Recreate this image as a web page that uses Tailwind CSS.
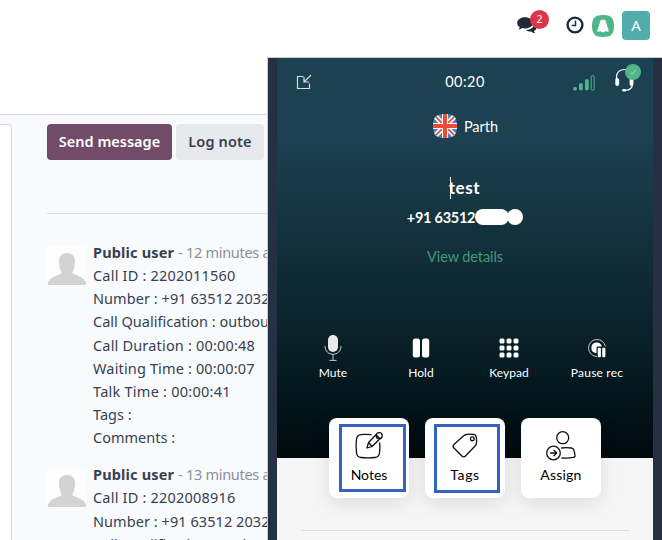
<!DOCTYPE html>
<html lang="en">
<head>
<meta charset="utf-8">
<title>Call log</title>
<script src="https://cdn.jsdelivr.net/npm/@tailwindcss/browser@4"></script>
</head>
<body class="bg-white">
<div class="relative flex h-[540px] w-[662px] flex-col overflow-hidden font-['Noto_Sans',sans-serif] text-[#374151]">

  <header class="flex h-[115px] shrink-0 items-start justify-end border-b border-[#d8dadd] bg-white pt-[11px] pr-3">
    <div class="relative mt-[6px] mr-[29px] h-[18px] w-5">
      <svg class="h-[18px] w-5" viewBox="0 0 20 18" fill="#1f2937">
        <path d="M8 0.3C3.6 0.3 0.2 2.8 0.2 6c0 1.8 1 3.3 2.6 4.3-.3.9-.9 1.600-1.500 2.100 1.600 0 3-.6 4-1.300.9.200 1.800.300 2.700.300 4.400 0 7.900-2.400 7.900-5.500S12.400.3 8 .3z"/>
        <path d="M17.200 7c.2 3.200-3.300 5.800-8.200 5.900 1.200 1.100 3.100 1.700 5.200 1.700 1 1 2.500 1.600 4.200 1.600-.7-.6-1.200-1.300-1.400-2.100 1.600-.9 2.600-2 2.600-3.500 0-1.500-.9-2.800-2.400-3.600z"/>
      </svg>
      <span class="absolute -top-[7px] left-[13px] flex h-[19px] w-[19px] items-center justify-center rounded-full bg-[#dc3545] pb-px text-[10.500px] leading-none text-white">2</span>
    </div>
    <svg class="mt-[5px] mr-2 h-[18px] w-[18px]" viewBox="0 0 18 18" fill="none" stroke="#1f2937">
      <circle cx="9" cy="9" r="7.400" stroke-width="2.400"/><path d="M9.500 4.500v5H5.800" stroke-width="1.500"/>
    </svg>
    <svg class="mt-[4px] mr-2 h-[22px] w-[22px]" viewBox="0 0 22 22">
      <path d="M11 0C19 0 22 3 22 11s-3 11-11 11S0 19 0 11 3 0 11 0z" fill="#50b588"/>
      <path d="M9.600 4.800h2.800q.8 0 1.100.9l3.200 9.800q.3 1.500-.9 1.200c-1.300-.4-1.700-.8-2.300-.4q-1.200 1-2.500 1t-2.500-1c-.6-.4-1 0-2.300.4q-1.200.3-.9-1.200l3.200-9.800q.3-.9 1.100-.9z" fill="#fff"/>
    </svg>
    <div class="flex h-[29px] w-7 items-center justify-center rounded bg-[#51acac] text-[15px] text-white">A</div>
  </header>

  <main class="flex min-h-0 flex-1 bg-[#f9fafb]">
    <div class="mt-[9px] w-3 shrink-0 rounded-tr border-t border-r border-[#d8dadd] bg-white"></div>
    <section class="ml-[35px] flex w-[221px] shrink-0 flex-col pt-[9px]">
      <div class="flex h-9 shrink-0 gap-1 text-[14.500px] font-semibold">
        <button class="w-[125px] shrink-0 rounded-[4px] bg-[#714b67] text-white">Send message</button>
        <button class="w-[88px] shrink-0 rounded-[4px] bg-[#e7e9ed]"><span class="tracking-[0.150px]">Log note</span></button>
      </div>
      <div class="mt-[53px] border-t border-[#d8dadd]"></div>

      <div class="mt-[27px] flex h-[222px] shrink-0 gap-[6px]">
        <svg class="mt-[5px] h-10 w-10 shrink-0" viewBox="0 0 40 40"><rect width="40" height="40" fill="#fdfdfd"/><path d="M20 7c5 0 8.200 3 8 8.500-.2 4.500-1 8.300-2.800 11 .3 1 1.300 1.500 2.800 2 5.500 2 10 4.700 11 8 .6 1.800-.3 2.500-1.800 2.500H3c-1.500 0-2.600-.7-2-2.500 1-3.300 5.500-6 11-8 1.500-.5 2.500-1 2.800-2-1.800-2.700-2.600-6.500-2.800-11C11.800 10 15 7 20 7z" fill="#d3d3d3"/></svg>
        <div class="text-[14.500px] leading-[23.150px] whitespace-nowrap">
          <p><b class="font-bold tracking-[0.170px]">Public user</b> <span class="tracking-[-0.280px] text-[#8b919b]">- 12 minutes ago</span></p>
          <p class="tracking-[0.200px]">Call ID : 2202011560</p><p class="tracking-[0.060px]">Number : +91 63512 20321</p><p>Call Qualification : outbound</p><p class="tracking-[0.180px]">Call Duration : 00:00:48</p><p class="tracking-[0.150px]">Waiting Time : 00:00:07</p><p class="tracking-[0.250px]">Talk Time : 00:00:41</p><p>Tags :</p><p>Comments :</p>
        </div>
      </div>
      <div class="flex shrink-0 gap-[6px]">
        <svg class="mt-[5px] h-10 w-10 shrink-0" viewBox="0 0 40 40"><rect width="40" height="40" fill="#fdfdfd"/><path d="M20 7c5 0 8.200 3 8 8.500-.2 4.500-1 8.300-2.800 11 .3 1 1.300 1.500 2.800 2 5.500 2 10 4.700 11 8 .6 1.800-.3 2.500-1.800 2.500H3c-1.500 0-2.600-.7-2-2.500 1-3.300 5.500-6 11-8 1.500-.5 2.500-1 2.800-2-1.800-2.700-2.600-6.500-2.800-11C11.800 10 15 7 20 7z" fill="#d3d3d3"/></svg>
        <div class="text-[14.500px] leading-[23.400px] whitespace-nowrap">
          <p><b class="font-bold tracking-[0.170px]">Public user</b> <span class="tracking-[-0.280px] text-[#8b919b]">- 13 minutes ago</span></p>
          <p class="tracking-[0.200px]">Call ID : 2202008916</p><p class="tracking-[0.060px]">Number : +91 63512 20321</p><p>Call Qualification : outbound</p>
        </div>
      </div>
    </section>
  </main>

  <aside class="absolute top-[57px] left-[267px] h-[483px] w-[395px] overflow-hidden border-t border-l border-[#c9cdd2] bg-[#253142] px-[9px] font-['Lato',sans-serif] text-white">
    <div class="flex h-full flex-col bg-[#f6f6f6]">
      <div class="flex h-[400px] shrink-0 flex-col bg-linear-to-b from-[#1c4150] from-20% via-[#0b222b] via-68% to-[#000a0e]">
        <div class="grid h-[46px] grid-cols-3 items-center px-[19px]">
          <svg class="mt-px h-4 w-4" viewBox="0 0 16 16" fill="none" stroke="#d7dfe2" stroke-width="1.200"><path d="M7.500 2.500h-6v12h12v-5M15 1 8 8M8 3v5h5"/></svg>
          <span class="pt-px text-center text-[14.500px] tracking-[0.450px]">00:20</span>
          <div class="flex h-7 items-end justify-end">
            <svg class="mr-5 mb-1 h-4 w-[22px]" viewBox="0 0 22 16" fill="#50b588"><circle cx="2" cy="13.700" r="1.900"/><rect x="6" y="8" width="3.800" height="7.500" rx="1.900"/><rect x="12" y="4" width="3.800" height="11.500" rx="1.900"/><rect x="18.200" y=".6" width="3" height="14.600" rx="1.500" fill="none" stroke="#50b588"/></svg>
            <div class="relative mb-[3px] h-6 w-[19px]">
              <svg class="h-6 w-[19px]" viewBox="0 0 19 24" fill="none" stroke="#fff"><path d="M1.500 12V9C1.500 4 5 1.500 9.500 1.500S17.500 4 17.500 9v7c0 4-2 6-7.500 6.500" stroke-width="1.200"/><path d="M2.200 12v4M16.500 12v4" stroke-width="3.800" stroke-linecap="round"/><rect x="7.200" y="21" width="4" height="2.600" rx="1.300" fill="#fff" stroke="none"/></svg>
              <span class="absolute top-[-4px] left-[10px] flex h-4 w-4 items-center justify-center rounded-full bg-[#50b588]"><svg class="h-2 w-2" viewBox="0 0 8 8" fill="none" stroke="#c5e8d8" stroke-width=".7"><path d="m1.500 4.500 1.700 1.700L6.800 2"/></svg></span>
            </div>
          </div>
        </div>
        <div class="mt-[10px] flex h-6 items-center justify-center gap-[7px] pl-px">
          <svg class="h-6 w-6" viewBox="0 0 24 24"><defs><clipPath id="flag"><path d="M12 0C21 0 24 3 24 12s-3 12-12 12S0 21 0 12 3 0 12 0z"/></clipPath></defs><g clip-path="url(#flag)"><path d="M0 0h24v24H0z" fill="#4a83be"/><path d="M0 0 24 24M24 0 0 24" stroke="#fff" stroke-width="5"/><path d="M0 0 24 24M24 0 0 24" stroke="#ee4b36" stroke-width="1.800"/><path d="M12 0v24M0 12h24" stroke="#fff" stroke-width="6"/><path d="M12 0v24M0 12h24" stroke="#ee4b36" stroke-width="4"/></g></svg>
          <span class="pt-[2px] text-[14.500px]">Parth</span>
        </div>
        <div class="mt-[39px] flex h-[22px] items-center justify-center"><span class="h-[22px] w-px bg-white"></span><span class="-ml-[2px] text-[17px] font-bold tracking-[0.600px]">test</span></div>
        <div class="mt-[9px] flex h-[18px] items-center justify-center"><span class="pt-px text-[14.500px] font-bold tracking-[-0.250px]">+91 63512</span><span class="flex h-4 w-[34px] rounded-full bg-white"></span><span class="-ml-[2px] h-4 w-4 rounded-full bg-white"></span></div>
        <p class="mt-[21px] text-center text-[14.500px] leading-5 tracking-[-0.100px] text-[#3f9b77]">View details</p>
        <div class="mt-[68px] grid grid-cols-4 px-3 text-center text-[12px] leading-4">
          <div class="flex flex-col items-center gap-[4px]"><svg class="h-[26px] w-[18px]" viewBox="0 0 18 26" fill="none" stroke="#c2cace"><rect x="4" y="0" width="10" height="17" rx="5" fill="#e6e8ea" stroke="none"/><path d="M1 11c0 11 16 11 16 0M9 19v6M5.500 25.400h7"/></svg>Mute</div>
          <div class="flex flex-col items-center gap-[4px]"><svg class="h-[26px] w-[18px]" viewBox="0 0 18 26" fill="#fff"><rect x=".8" y="3.500" width="7.200" height="19" rx="2.500"/><rect x="10" y="3.500" width="7.200" height="19" rx="2.500"/></svg>Hold</div>
          <div class="flex flex-col items-center gap-[4px]"><svg class="h-[26px] w-5" viewBox="0 0 20 26" fill="#fff"><g id="dots"><rect x=".5" y="3.500" width="5" height="5" rx="1.500"/><rect x="7.500" y="3.500" width="5" height="5" rx="1.500"/><rect x="14.500" y="3.500" width="5" height="5" rx="1.500"/></g><use href="#dots" y="7"/><use href="#dots" y="14"/></svg>Keypad</div>
          <div class="flex flex-col items-center gap-[4px]"><svg class="h-[26px] w-[18px]" viewBox="0 0 18 26"><path d="M9 21.500A8.500 8.500 0 1 1 17.400 11.500" fill="none" stroke="#c2cace"/><path d="M7.500 18A5.300 5.300 0 1 1 13.800 11.500H9.500Q8.500 11.500 8.500 13V18z" fill="#fff"/><rect x="9.700" y="12.700" width="3.200" height="9.500" rx="1" fill="#fff"/><rect x="14.200" y="12.700" width="3.200" height="9.500" rx="1" fill="#fff"/></svg><span class="tracking-[0.200px]">Pause rec</span></div>
        </div>
      </div>
      <div class="relative -mt-10 flex justify-center gap-4 text-[14px] leading-4 text-black">
        <div class="relative flex h-20 w-20 flex-col items-center rounded-[8px] bg-white pt-[13px] shadow-[0_6px_20px_rgba(0,20,20,0.10)]">
          <svg class="h-[30px] w-[30px]" viewBox="0 0 30 30" fill="none" stroke="#111" stroke-width="1.300" stroke-linecap="round" stroke-linejoin="round"><path d="M17 3.700Q12 3.200 7 3.600 3 4 2.500 8q-.8 7 0 14 .5 4 4.500 4.500 7 .8 14 0 4-.5 4.500-4.500.6-5 .3-10"/><path d="m13 17 1.500-5.500L22 3.800l4 4L18 15.500zM14.500 11.500l3.500 4"/><circle cx="25.200" cy="4.700" r="3"/></svg>
          <span class="mt-[6px]">Notes</span>
          <span class="absolute top-[6px] left-[10px] h-[68px] w-[67px] border-3 border-[#3462bd]"></span>
        </div>
        <div class="relative flex h-20 w-20 flex-col items-center rounded-[8px] bg-white pt-[13px] shadow-[0_6px_20px_rgba(0,20,20,0.10)]">
          <svg class="h-[30px] w-[30px]" viewBox="0 0 30 30" fill="none" stroke="#111" stroke-width="1.300" stroke-linejoin="round"><path d="M16 3.500q3-.8 8 0 2 .3 2.300 2.300.6 4 0 7.200-.2 1-1 1.800l-9.800 10.200q-1.800 1.800-3.600 0l-8-8q-1.800-1.800 0-3.600L14 4.600q1-.9 2-1.100z"/><circle cx="22.300" cy="7.700" r="1.900"/></svg>
          <span class="mt-[6px] tracking-[0.600px]">Tags</span>
          <span class="absolute top-[6px] left-[9px] h-[69px] w-[66px] border-3 border-[#3462bd]"></span>
        </div>
        <div class="flex h-20 w-20 flex-col items-center rounded-[8px] bg-white pt-[13px] shadow-[0_6px_20px_rgba(0,20,20,0.10)]">
          <svg class="h-[30px] w-[30px]" viewBox="0 0 30 30" fill="none" stroke="#111" stroke-width="1.300" stroke-linecap="round" stroke-linejoin="round"><circle cx="16.700" cy="6.700" r="6"/><circle cx="7.500" cy="22" r="6.800"/><path d="M4.500 22h6M8 19.300l2.700 2.700L8 24.700M15.500 17q5-.8 10 0 2 .3 2.500 2.500l1 4.500q.5 2-1.500 2.400-5.500 1-11.500.6"/></svg>
          <span class="mt-[6px] tracking-[0.200px]">Assign</span>
        </div>
      </div>
      <div class="mx-6 mt-8 border-t border-[#dedfdf]"></div>
    </div>
  </aside>
</div>
</body>
</html>
